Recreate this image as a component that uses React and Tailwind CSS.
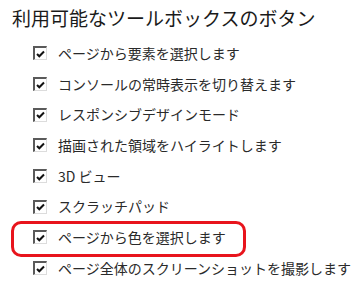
import React from "react";

const items = [
  "ページから要素を選択します",
  "コンソールの常時表示を切り替えます",
  "レスポンシブデザインモード",
  "描画された領域をハイライトします",
  "3D ビュー",
  "スクラッチパッド",
  "ページから色を選択します",
  "ページ全体のスクリーンショットを撮影します",
];

function Check() {
  return (
    <span className="flex h-[14px] w-[14px] shrink-0 items-center justify-center border-t-2 border-l-2 border-b border-r border-t-[#5a5a5a] border-l-[#5a5a5a] border-b-[#dcdcdc] border-r-[#dcdcdc] bg-white">
      <svg width="9" height="8" viewBox="0 0 9 8">
        <path d="M1 4 L3.3 6.3 L8 1.5" fill="none" stroke="#111" strokeWidth="2" />
      </svg>
    </span>
  );
}

export default function App() {
  return (
    <div
      className="h-[287px] w-[361px] overflow-hidden bg-white"
      style={{ fontFamily: '"Noto Sans CJK JP", "Noto Sans", sans-serif' }}
    >
      <div className="pl-[12px] pt-[6px] text-[19px] leading-[24px] text-[#1a1a1a]">
        利用可能なツールボックスのボタン
      </div>
      <ul className="mt-[8px] pl-[33px]">
        {items.map((t, i) => (
          <li key={i} className="relative flex h-[30.7px] items-center gap-[11px] text-[14px] text-[#2a2a2a]">
            {i === 6 && (
              <span className="absolute left-[-22px] top-[-1px] h-[36px] w-[235px] rounded-[10px] border-[3px] border-[#e8141c]" />
            )}
            <Check />
            <span className="whitespace-nowrap">{t}</span>
          </li>
        ))}
      </ul>
    </div>
  );
}
